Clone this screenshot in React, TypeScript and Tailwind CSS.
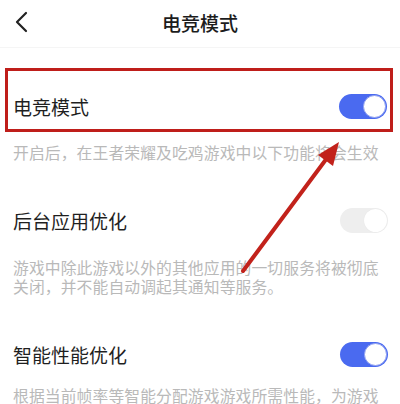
import React from "react";

type ToggleProps = { on: boolean };

function Toggle({ on }: ToggleProps) {
  return (
    <div
      className={
        "relative w-[48px] h-[25px] rounded-full " +
        (on ? "bg-[#4a6af0]" : "bg-[#eeeeee]")
      }
    >
      <div
        className={
          "absolute top-[1px] right-[1px] w-[23px] h-[23px] rounded-full bg-white " +
          (on ? "border border-[#8fa0f0]" : "shadow-[0_0_1px_rgba(0,0,0,0.08)]")
        }
      />
    </div>
  );
}

function Row({ label, on }: { label: string; on: boolean }) {
  return (
    <div className="flex items-center justify-between h-[56px] pl-[13px] pr-[12px]">
      <span className="text-[19px] leading-none text-[#1f1f1f]">{label}</span>
      <Toggle on={on} />
    </div>
  );
}

function Desc({ children }: { children: React.ReactNode }) {
  return (
    <p className="px-[13px] text-[15.8px] leading-[19px] text-[#b9b9b9] tracking-[0.1px]">
      {children}
    </p>
  );
}

export default function App() {
  return (
    <div
      className="relative w-[400px] h-[404px] overflow-hidden bg-white"
      style={{ fontFamily: '"Noto Sans CJK SC", "Noto Sans", sans-serif' }}
    >
      <header className="relative h-[48px] flex items-center justify-center border-b border-[#f5f5f5]">
        <svg
          className="absolute left-[13px] top-[11px]"
          width="18"
          height="22"
          viewBox="0 0 18 22"
          fill="none"
        >
          <path
            d="M13 2 L4 11 L13 20"
            stroke="#222"
            strokeWidth="2.2"
            strokeLinecap="round"
            strokeLinejoin="round"
          />
        </svg>
        <h1 className="text-[19px] font-medium text-[#1c1c1c] -mt-[1px]">电竞模式</h1>
      </header>

      <div className="mt-[20px] mx-[5px] w-[388px] h-[64px] border-[3px] border-[#bf1e1a] flex items-center justify-between pl-[5px] pr-[3px] pt-[13px]">
        <span className="text-[19px] leading-none text-[#1f1f1f]">电竞模式</span>
        <Toggle on />
      </div>

      <div className="mt-[11px]">
        <Desc>开启后，在王者荣耀及吃鸡游戏中以下功能将会生效</Desc>
      </div>

      <div className="mt-[30px]">
        <Row label="后台应用优化" on={false} />
      </div>
      <div className="mt-[10px]">
        <Desc>
          游戏中除此游戏以外的其他应用的一切服务将被彻底
          <br />
          关闭，并不能自动调起其通知等服务。
        </Desc>
      </div>

      <div className="mt-[30px]">
        <Row label="智能性能优化" on />
      </div>
      <div className="mt-[4px]">
        <Desc>根据当前帧率等智能分配游戏游戏所需性能，为游戏</Desc>
      </div>

      <svg
        className="absolute inset-0 pointer-events-none"
        width="400"
        height="404"
        viewBox="0 0 400 404"
      >
        <line
          x1="243"
          y1="271"
          x2="330"
          y2="154"
          stroke="#c2221b"
          strokeWidth="4"
          strokeLinecap="round"
        />
        <polygon points="339,142 333,166 318,155" fill="#c2221b" />
      </svg>
    </div>
  );
}
